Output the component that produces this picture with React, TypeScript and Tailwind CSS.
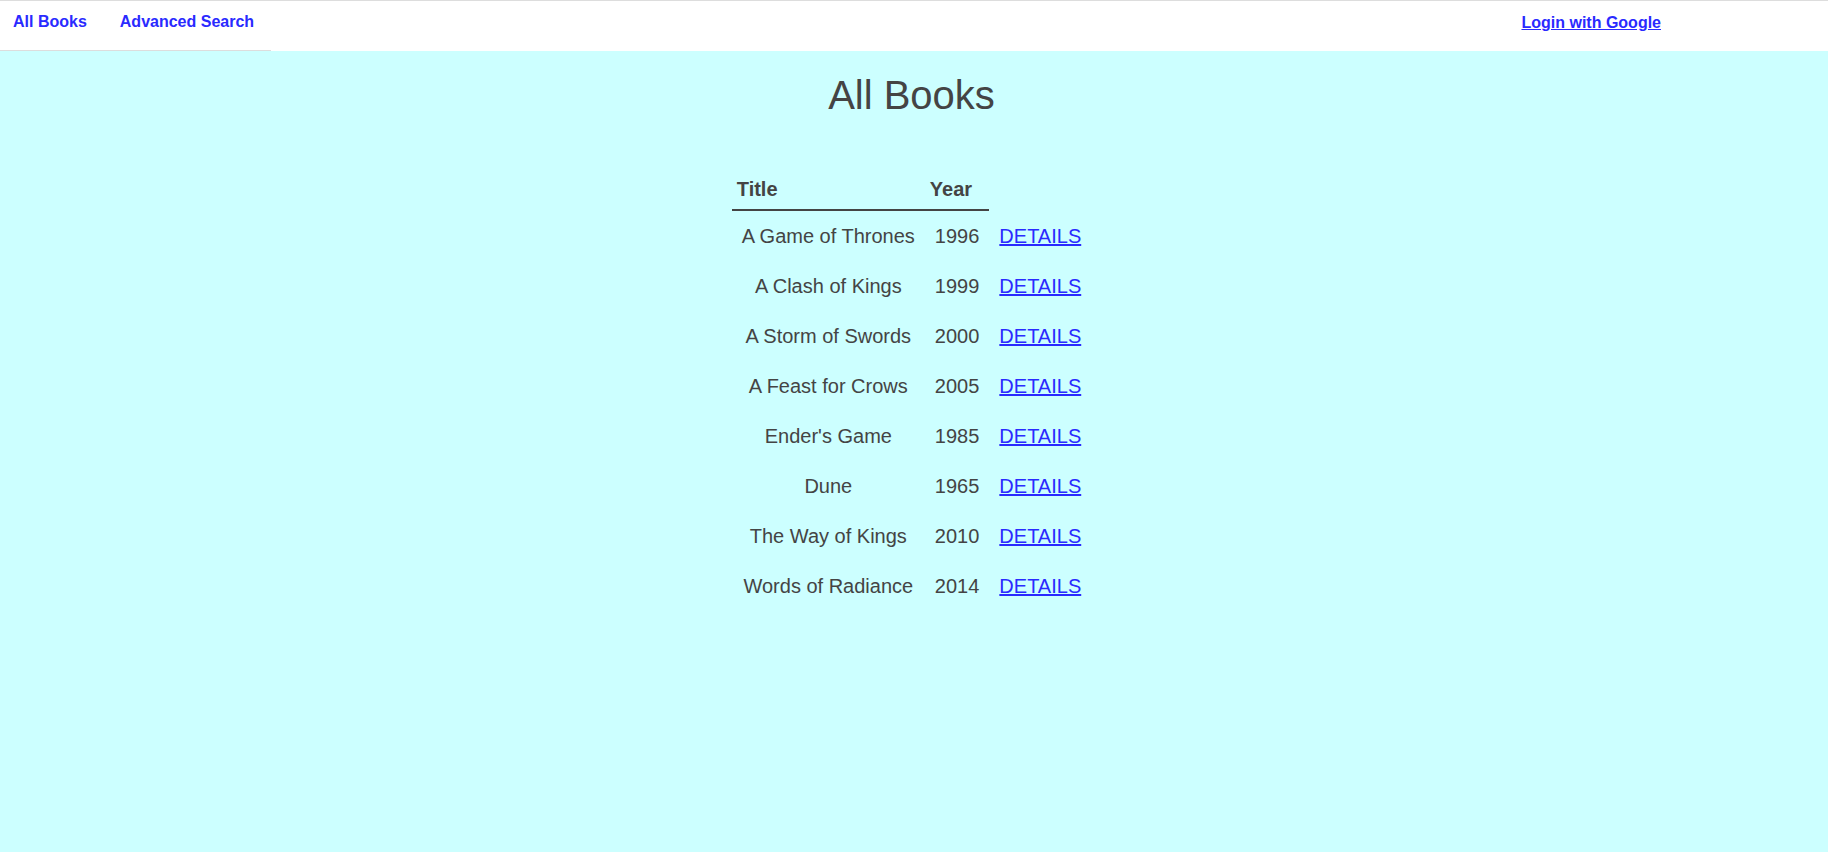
import React from "react";

const books: [string, number][] = [
  ["A Game of Thrones", 1996],
  ["A Clash of Kings", 1999],
  ["A Storm of Swords", 2000],
  ["A Feast for Crows", 2005],
  ["Ender's Game", 1985],
  ["Dune", 1965],
  ["The Way of Kings", 2010],
  ["Words of Radiance", 2014],
];

export default function App() {
  return (
    <div
      className="min-h-screen flex flex-col bg-[#ccffff]"
      style={{ fontFamily: '"Liberation Sans", Arial, sans-serif' }}
    >
      <nav className="flex items-start justify-between bg-white border-t border-[#dddddd] h-[51px]">
        <ul className="flex h-[50px] border-b border-[#dddddd] pl-[13px] pr-[17px] pt-[9px] gap-[33px]">
          <li>
            <a href="#" className="text-[16px] leading-[18px] font-bold text-[#2a2aff] no-underline">
              All Books
            </a>
          </li>
          <li>
            <a href="#" className="text-[16px] leading-[18px] font-bold text-[#2a2aff] no-underline">
              Advanced Search
            </a>
          </li>
        </ul>
        <div className="pt-[10px] mr-[167px]">
          <a href="#" className="text-[16px] leading-[18px] font-bold text-[#2a2aff] underline">
            Login with Google
          </a>
        </div>
      </nav>
      <main className="flex-1 flex flex-col items-center pr-[5px] text-[#444444]">
        <h1 className="mt-[21px] text-[40px] leading-[46px] font-normal">All Books</h1>
        <table className="mt-[51px] border-collapse text-[20px] leading-[24px]">
          <thead>
            <tr>
              <th className="text-left font-bold pl-[5px] pr-[5px] pt-[8px] pb-[8px] border-b-2 border-[#444444]">
                Title
              </th>
              <th className="text-left font-bold pl-[5px] pr-[5px] pt-[8px] pb-[8px] border-b-2 border-[#444444]">
                Year
              </th>
              <th></th>
            </tr>
          </thead>
          <tbody>
            {books.map(([title, year]) => (
              <tr key={title}>
                <td className="text-center px-[10px] py-[13px]">{title}</td>
                <td className="text-center px-[10px] py-[13px]">{year}</td>
                <td className="text-center px-[10px] py-[13px]">
                  <a href="#" className="text-[#2a2aff] underline">
                    DETAILS
                  </a>
                </td>
              </tr>
            ))}
          </tbody>
        </table>
      </main>
    </div>
  );
}
